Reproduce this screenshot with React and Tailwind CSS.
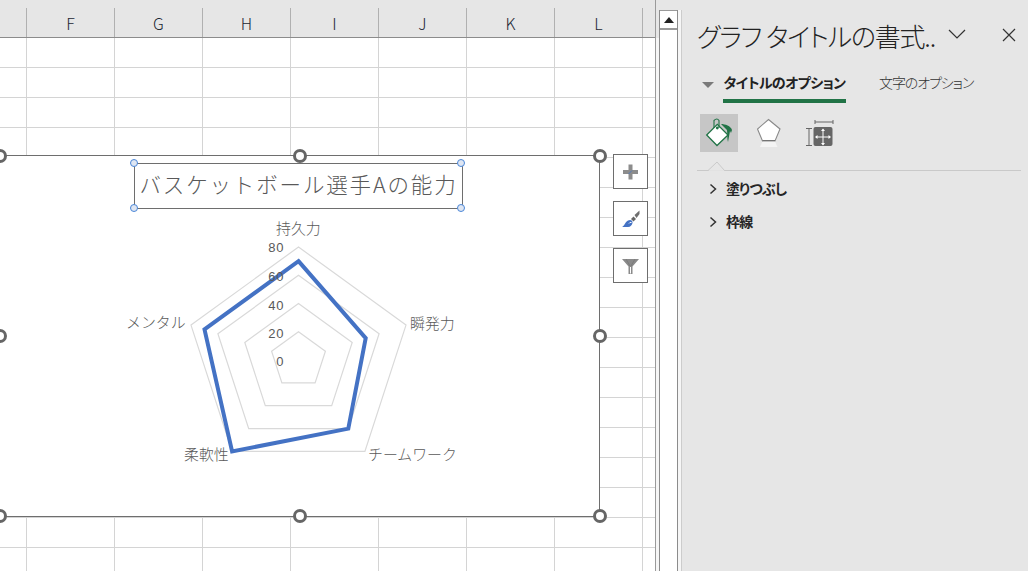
const COLS = ["F", "G", "H", "I", "J", "K", "L"];
const ROWS = Array.from({ length: 18 }, (_, i) => i);
const CX = 298.5;
const CY = 360;
const ANGLES = [0, 72, 144, 216, 288].map((d) => (d * Math.PI) / 180);
const pts = (radii) =>
  radii
    .map((r, i) => `${(CX + r * Math.sin(ANGLES[i])).toFixed(1)},${(CY - r * Math.cos(ANGLES[i])).toFixed(1)}`)
    .join(" ");
const ring = (r) => pts([r, r, r, r, r]);
const S = 113 / 80;
const DATA = [70, 50, 60, 80, 70].map((v) => v * S);

function Handle({ x, y }) {
  return (
    <span
      className="absolute w-[14px] h-[14px] rounded-full bg-white border-[3px] border-[#666666]"
      style={{ left: x - 7, top: y - 7 }}
    />
  );
}
function Dot({ x, y }) {
  return (
    <span
      className="absolute w-[8px] h-[8px] rounded-full bg-[#dfe6f2] border border-[#4a86d8]"
      style={{ left: x - 4, top: y - 4 }}
    />
  );
}

function Chart() {
  return (
    <div className="absolute left-[-1px] top-0 w-[700px] h-[571px] pointer-events-none">
      <div className="absolute left-0 top-[155px] w-[601px] h-[362px] bg-white border border-[#6e6e6e]" />
      <svg className="absolute left-[1px] top-0" width="640" height="571">
        {[28.25, 56.5, 84.75, 113].map((r) => (
          <polygon key={r} points={ring(r)} fill="none" stroke="#d9d9d9" strokeWidth="1.2" />
        ))}
        <polygon points={pts(DATA)} fill="none" stroke="#4472c4" strokeWidth="4" strokeLinejoin="miter" />
        <g fontFamily="'Noto Sans CJK JP', sans-serif" fontSize="14.9" fontWeight="300" fill="#595959">
          <text x="276" y="234">持久力</text>
          <text x="410" y="329">瞬発力</text>
          <text x="368" y="460">チームワーク</text>
          <text x="184" y="460">柔軟性</text>
          <text x="126" y="328">メンタル</text>
        </g>
        <g fontFamily="'Liberation Sans', sans-serif" fontSize="13" fill="#595959" textAnchor="end" letterSpacing="0.6">
          <text x="284" y="252">80</text>
          <text x="284" y="281">60</text>
          <text x="284" y="310">40</text>
          <text x="284" y="338">20</text>
          <text x="284" y="366">0</text>
        </g>
      </svg>
      <div className="absolute left-[135px] top-[163px] w-[329px] h-[46px] border border-[#6e6e6e] flex items-center justify-center pb-[5px] text-[21.5px] leading-none tracking-[1.85px] text-[#595959] font-light whitespace-nowrap">
        バスケットボール選手Aの能力
      </div>
      <Dot x={135} y={163} />
      <Dot x={462} y={163} />
      <Dot x={135} y={208} />
      <Dot x={462} y={208} />
      <Handle x={1} y={156} />
      <Handle x={301} y={156} />
      <Handle x={601} y={156} />
      <Handle x={1} y={336} />
      <Handle x={601} y={336} />
      <Handle x={1} y={516} />
      <Handle x={301} y={516} />
      <Handle x={601} y={516} />
      <div className="absolute left-[614px] top-[154px] flex flex-col gap-3">
        <ChartButton>
          <path d="M15.5 10.500h4v5.500H25v4h-5.500v5.500h-4V20H10v-4h5.500z" fill="#8c8c8c" />
          <path d="M15.500 20l3.500-3.500" stroke="#4472c4" strokeWidth="0.8" />
        </ChartButton>
        <ChartButton>
          <path d="M9 26c2.500-1 3-5 6-6.500s5 .5 4.500 2.500-2 4-4.500 4z" fill="#4472c4" />
          <path d="M16 22.500a2 2 0 0 1 2.500-1" stroke="#fff" strokeWidth="1" fill="none" />
          <path d="M18 18l2.500-2.500 2.500 2.500-2.500 2.500z" fill="#666" />
          <path d="M21.500 14l5-4.500v3.500l-3 4z" fill="#6e6e6e" />
        </ChartButton>
        <ChartButton>
          <path d="M9 11h17l-6.500 7.500V26h-4v-7.500z" fill="#8a8a8a" />
          <path d="M17 19v6.500h1V19z" fill="#fff" />
          <path d="M13 11l4 7M22 11l-4 7" stroke="#777" strokeWidth="0.8" fill="none" />
        </ChartButton>
      </div>
    </div>
  );
}

function ChartButton({ children }) {
  return (
    <div className="w-[35px] h-[35px] bg-white border border-[#6e6e6e] flex items-center justify-center">
      <svg width="33" height="33" viewBox="1 1 33 33">{children}</svg>
    </div>
  );
}

function Sheet() {
  return (
    <div className="relative w-[656px] h-full overflow-hidden bg-white border-r border-[#9a9a9a] shrink-0">
      <div className="flex h-[38px] bg-[#e6e6e6] border-b border-[#8c8c8c]">
        <div className="w-[27px] h-[29px] mt-2 border-r border-[#b0b0b0]" />
        {COLS.map((c) => (
          <div
            key={c}
            className="w-[88px] h-[29px] mt-2 border-r border-[#b0b0b0] flex items-center justify-center text-[16px] font-light text-[#1c2733]"
          >
            {c}
          </div>
        ))}
      </div>
      {ROWS.map((r) => (
        <div key={r} className="flex h-[30px] border-b border-[#d4d4d4]">
          <div className="w-[27px] border-r border-[#d4d4d4]" />
          {COLS.map((c) => (
            <div key={c} className="w-[88px] border-r border-[#d4d4d4]" />
          ))}
        </div>
      ))}
      <Chart />
    </div>
  );
}

function Scrollbar() {
  return (
    <div className="w-[25px] h-full shrink-0 flex flex-col bg-[#f6f6f6]">
      <div className="h-[10px] bg-[#e6e6e6] shrink-0" />
      <div className="flex-1 flex">
        <div className="w-[3px] h-[28px] bg-[#e6e6e6] shrink-0" />
        <div className="w-[19px] flex flex-col bg-white border-x border-[#8c8c8c]">
          <div className="h-[20px] border-t border-b-2 border-[#9a9a9a] flex items-center justify-center">
            <svg width="10" height="6">
              <path d="M0 6L5 0l5 6z" fill="#222" />
            </svg>
          </div>
        </div>
      </div>
    </div>
  );
}

function Pane() {
  return (
    <div className="flex-1 h-full bg-[#e6e6e6] pt-[10px]">
      <div className="h-full border-l border-[#cccccc] pl-[15px] pr-[6px] flex flex-col [font-feature-settings:'palt']">
        <div className="flex items-center h-[52px] pb-[1px] text-[#222]">
          <span className="text-[26px] font-light leading-none tracking-[-1.2px] whitespace-nowrap w-[251px]">
            グラフ タイトルの書式..
          </span>
          <svg width="18" height="10" className="mt-[-3px]">
            <path d="M1 1l8 8 8-8" fill="none" stroke="#333" strokeWidth="1.2" />
          </svg>
          <svg width="14" height="14" className="ml-[36px] mt-[-1px]">
            <path d="M1 1l12 12M13 1L1 13" fill="none" stroke="#333" strokeWidth="1.2" />
          </svg>
        </div>
        <div className="flex h-[43px] mt-[-1px]">
          <svg width="26" height="36" className="shrink-0">
            <path d="M5 21h12l-6 6z" fill="#7a7a7a" />
          </svg>
          <div className="w-[123px] h-[42px] border-b-4 border-[#217346] text-[14px] font-bold text-[#222] text-center leading-[43px] tracking-[-0.6px] whitespace-nowrap">
            タイトルのオプション
          </div>
          <div className="ml-[33px] text-[14px] text-[#333] leading-[43px] font-light tracking-[-1.1px] whitespace-nowrap">
            文字のオプション
          </div>
        </div>
        <div className="flex items-start mt-[10px] ml-[3px] h-[38px]">
          <div className="w-[38px] h-[38px] bg-[#c6c6c6] shrink-0">
            <svg width="38" height="38">
              <path d="M6.700 21l10.600-10.700L28 21 17 31.500z" fill="#fff" stroke="#217346" strokeWidth="1.3" />
              <path d="M14 14V6.500q3-3 5 0V14" fill="none" stroke="#217346" strokeWidth="1.1" />
              <circle cx="17.300" cy="14" r="1.400" fill="#217346" />
              <path d="M21 10c4 0 10 2 11 6l-1 3-1-2-2 11c-1-3-.5-8-1-12z" fill="#217346" />
            </svg>
          </div>
          <svg width="30" height="38" className="ml-[19px] shrink-0">
            <path d="M11.500 5.500L23 15 18 27H5.500L.5 15z" fill="#fff" stroke="#8a8a8a" strokeWidth="1.1" />
            <path d="M5.500 26.800H18" stroke="#666" strokeWidth="1.300" />
            <path d="M5.500 27.500H18l2.500 5.500H3z" fill="#f4f4f4" />
          </svg>
          <svg width="30" height="38" className="ml-[19px] shrink-0">
            <path d="M9 6v4M27 6v4M9 8h18" stroke="#666" fill="none" strokeWidth="1" />
            <path d="M0 14.500h6M3 14.500v17M0 31.500h6" stroke="#666" fill="none" strokeWidth="1" />
            <rect x="7.500" y="13" width="19" height="19" rx="2" fill="#666" />
            <path d="M17 15.500v15M10 23h14" stroke="#fff" strokeWidth="1" />
            <path d="M17 14.500l-2 2.500h4zM17 31.500l-2-2.500h4zM9 23l2.500-2v4zM25 23l-2.500-2v4z" fill="#fff" />
          </svg>
        </div>
        <div className="relative mt-[18px] mr-[1px] h-px bg-[#c9c9c9] shrink-0">
          <svg width="18" height="10" className="absolute left-[11px] top-[-9px]">
            <path d="M0 9.500L9 1l7.500 8.500" fill="#e6e6e6" stroke="#c9c9c9" />
            <path d="M1 10h15" stroke="#e6e6e6" strokeWidth="1.500" />
          </svg>
        </div>
        {["塗りつぶし", "枠線"].map((t, i) => (
          <div
            key={t}
            className={
              "flex items-center h-[33px] pl-[12px] text-[14px] font-bold text-[#262626] tracking-[-0.8px] " +
              (i === 0 ? "mt-[1px]" : "")
            }
          >
            <svg width="8" height="12" className="mr-[9px]">
              <path d="M1.500 1.500L6.500 6l-5 4.500" fill="none" stroke="#333" strokeWidth="1.500" />
            </svg>
            {t}
          </div>
        ))}
      </div>
    </div>
  );
}

export default function App() {
  return (
    <div className="flex w-[1028px] h-[571px] overflow-hidden font-['Noto_Sans_CJK_JP','Noto_Sans',sans-serif]">
      <Sheet />
      <Scrollbar />
      <Pane />
    </div>
  );
}
